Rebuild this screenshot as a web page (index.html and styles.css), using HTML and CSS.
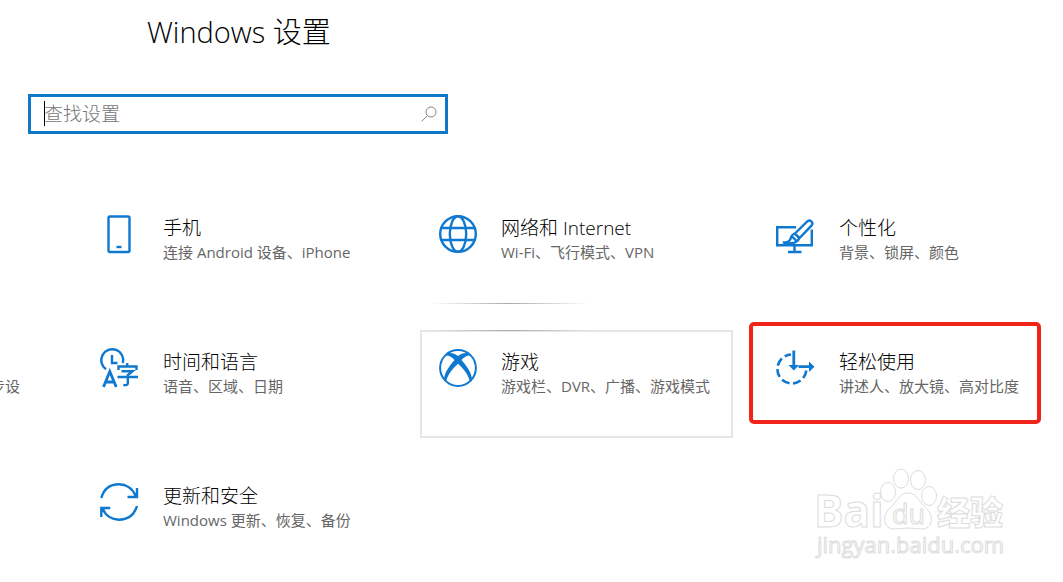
FILE: index.html
```html
<!DOCTYPE html>
<html lang="zh-CN">
<head>
<meta charset="utf-8">
<title>Windows 设置</title>
<link rel="stylesheet" href="styles.css">
</head>
<body>
<main class="settings">
  <h1 class="heading">Windows 设置</h1>
  <div class="search">
    <input class="search-input" type="text" placeholder="查找设置" aria-label="查找设置">
    <span class="caret"></span>
    <svg class="search-icon" viewBox="0 0 16 16" aria-hidden="true"><circle cx="10" cy="6" r="5"/><path d="M6.4 9.6L.7 15.3"/></svg>
  </div>

  <nav class="grid">
    <a class="tile col-phone" href="#phone">
      <svg class="icon" viewBox="0 0 38 38"><rect x="8.5" y="1.500" width="21" height="35.500" rx="1.500"/><path d="M16.500 32h5"/></svg>
      <span class="text"><span class="name">手机</span><span class="desc">连接 Android 设备、iPhone</span></span>
    </a>
    <a class="tile glow" href="#network">
      <svg class="icon" viewBox="0 0 38 38"><circle cx="20" cy="19" r="17.800"/><ellipse cx="20" cy="19" rx="8.200" ry="17.800"/><path d="M3.500 13h33M3.500 25h33"/></svg>
      <span class="text"><span class="name">网络和 Internet</span><span class="desc">Wi-Fi、飞行模式、VPN</span></span>
    </a>
    <a class="tile" href="#personalization">
      <svg class="icon" viewBox="0 0 38 38"><path d="M20 12.200H1.200v18h34.600V14.500M18.500 30v6M12 37h13.500"/><path d="M19 18.500L31.500 6.200a3 3 0 0 1 4.200 4.200L23.500 23zM18.500 18.500l5 5M16 21.500l4.500 4.500M18.500 18.500C15 20 15.500 21 14.500 24c-.6 2-2 3.400-7.500 3.500 2 .8 5 1 8 .8 4-.3 7-2 8.500-5.300"/></svg>
      <span class="text"><span class="name">个性化</span><span class="desc">背景、锁屏、颜色</span></span>
    </a>

    <a class="peek" href="#accounts"><span class="desc">步设</span></a>
    <a class="tile" href="#time">
      <svg class="icon" viewBox="0 0 38 38"><path d="M6 20.300A11 11 0 1 1 22.900 14M12 6v8h5.500"/><path d="M3.500 38L9.800 22.500 16.200 38M6 33h7.600" stroke-width="2.800"/><path d="M18.500 21v-3.500H36.500V21M27.200 14v3M21.500 22.300h11L27.800 26v8.500q0 2-4.500 1.500M17.500 28H38"/></svg>
      <span class="text"><span class="name">时间和语言</span><span class="desc">语音、区域、日期</span></span>
    </a>
    <a class="tile hovered" href="#gaming">
      <svg class="icon" viewBox="0 0 38 38"><circle cx="20" cy="19" r="17.900" stroke-width="2"/><path class="solid" d="M10 4.300C13.500 3.600 17 4.800 20 7c3-2.200 6.500-3.400 10-2.700l2 2.200c-3-.2-5.600 1.300-8.500 4.500 5.800 6.500 10.800 14 10.500 20.500l-2 1.500C31 27 25.500 19.500 20 14.800 14.500 19.500 9 27 8 33l-2-1.500C5.700 25 10.700 17.500 16.500 11 13.600 7.800 11 6.300 8 6.500z"/></svg>
      <span class="text"><span class="name">游戏</span><span class="desc">游戏栏、DVR、广播、游戏模式</span></span>
    </a>
    <a class="tile marked" href="#ease">
      <svg class="icon" viewBox="0 0 38 38"><path d="M30.300 21.500A14.500 14.500 0 1 1 15 5.500" stroke-width="2.600" stroke-dasharray="8.200 3.600"/><path d="M17.800 1.500v15M22.500 17.700h11" stroke-width="2.800"/><path class="solid" d="M12.500 16h10.600l-5.300 5.500zM33 12.400l5.500 5.300-5.500 5.300z"/></svg>
      <span class="text"><span class="name">轻松使用</span><span class="desc">讲述人、放大镜、高对比度</span></span>
    </a>

    <a class="tile col-phone" href="#update">
      <svg class="icon" viewBox="0 0 38 38"><path d="M1.300 15C4 5.500 11 1.300 19 1.300c7 0 13.500 4 16.500 11.500M37 5v9h-9.500M37 23C34 32.500 27 36.700 19 36.700c-7 0-13.500-4-16.500-11.500M1.300 34v-9h9"/></svg>
      <span class="text"><span class="name">更新和安全</span><span class="desc">Windows 更新、恢复、备份</span></span>
    </a>
  </nav>

  <svg class="watermark" viewBox="0 0 200 96" aria-label="Baidu 经验">
    <g><ellipse cx="72" cy="24" rx="7.500" ry="9.500"/><ellipse cx="85" cy="10.500" rx="7.500" ry="9.500"/><ellipse cx="102" cy="12" rx="7.500" ry="9.500"/><ellipse cx="113" cy="28" rx="7.500" ry="9.500"/><path d="M92 25c9 0 11 9 18 15 9 8 6 21-4 21-5 0-9-1-14-1s-9 1-14 1c-10 0-13-13-4-21 7-6 9-15 18-15z"/></g>
    <text class="mark-latin" x="-2" y="59">Bai</text>
    <text class="mark-du" x="76" y="56">du</text>
    <text class="mark-cjk" x="121" y="57">经验</text>
    <text class="mark-url" x="1" y="85">jingyan.baidu.com</text>
  </svg>
</main>
</body>
</html>
```
FILE: styles.css
```css
*, *::before, *::after { box-sizing: border-box; }
body {
  margin: 0;
  background: #fff;
  color: #000;
  font-family: "Open Sans", "Noto Sans CJK SC", sans-serif;
  overflow: hidden;
}
.settings { position: relative; min-height: 100vh; padding-top: 12px; }
.heading {
  margin: 0 0 42px 147px;
  font-size: 29px;
  line-height: 40px;
  font-weight: 300;
}
.search { position: relative; width: 420px; max-width: 90%; margin-left: 28px; }
.search-input {
  display: block;
  width: 100%;
  height: 40px;
  padding: 0 40px 1px 13px;
  border: 3px solid #0f78c8;
  outline: 0;
  background: #fff;
  font: 300 19px "Open Sans", "Noto Sans CJK SC", sans-serif;
}
.search-input::placeholder { color: #757575; opacity: 1; }
.caret { position: absolute; left: 16px; top: 7px; width: 1px; height: 25px; background: #000; }
.search-icon {
  position: absolute; right: 11px; top: 12px;
  width: 16px; height: 16px;
  fill: none; stroke: #858585; stroke-width: 1;
}
.grid {
  display: grid;
  grid-template-columns: 57px 313px 313px minmax(0, 1fr);
  grid-auto-rows: 108px;
  gap: 26px 25px;
  margin-top: 62px;
}
.col-phone { grid-column: 2; }
.tile {
  position: relative;
  display: flex;
  gap: 25px;
  padding: 19px 0 0 18px;
  color: inherit;
  text-decoration: none;
  white-space: nowrap;
}
.icon {
  flex: none;
  width: 38px; height: 38px;
  overflow: visible;
  fill: none; stroke: #0f78cf; stroke-width: 2.4;
}
.solid { fill: #0f78cf; stroke: none; }
.text { display: flex; flex-direction: column; }
.name { font-size: 19px; line-height: 27px; font-weight: 300; }
.desc { font-size: 15px; line-height: 21px; font-weight: 400; color: #666; }
.peek {
  display: flex;
  justify-content: flex-end;
  width: 20px;
  padding-top: 46px;
  overflow: hidden;
  white-space: nowrap;
  text-decoration: none;
}
.hovered { box-shadow: inset 0 0 0 2px #e6e6e6; }
.glow::after, .hovered::after {
  content: "";
  position: absolute;
  left: 10px;
  width: 160px; height: 1px;
  background: linear-gradient(90deg, transparent, #aaa, transparent);
}
.glow::after { bottom: 0; }
.hovered::after { top: 0; }
.marked::before {
  content: "";
  position: absolute;
  left: -9px; top: -8px;
  width: 292px; height: 102px;
  border: 4px solid #f02419;
  border-radius: 5px;
}
.watermark {
  position: absolute;
  right: 47px; bottom: 18px;
  width: 200px; height: 96px;
  overflow: visible;
  fill: #fff; stroke: #dcdcdc; stroke-width: 1;
}
.watermark text { font-family: "Open Sans", "Noto Sans CJK SC", sans-serif; }
.mark-latin { font-size: 44px; font-weight: 700; }
.mark-du { font-size: 27px; font-weight: 400; }
.mark-cjk { font-size: 33px; font-weight: 900; }
.mark-url { font-size: 22px; font-weight: 400; }
```
